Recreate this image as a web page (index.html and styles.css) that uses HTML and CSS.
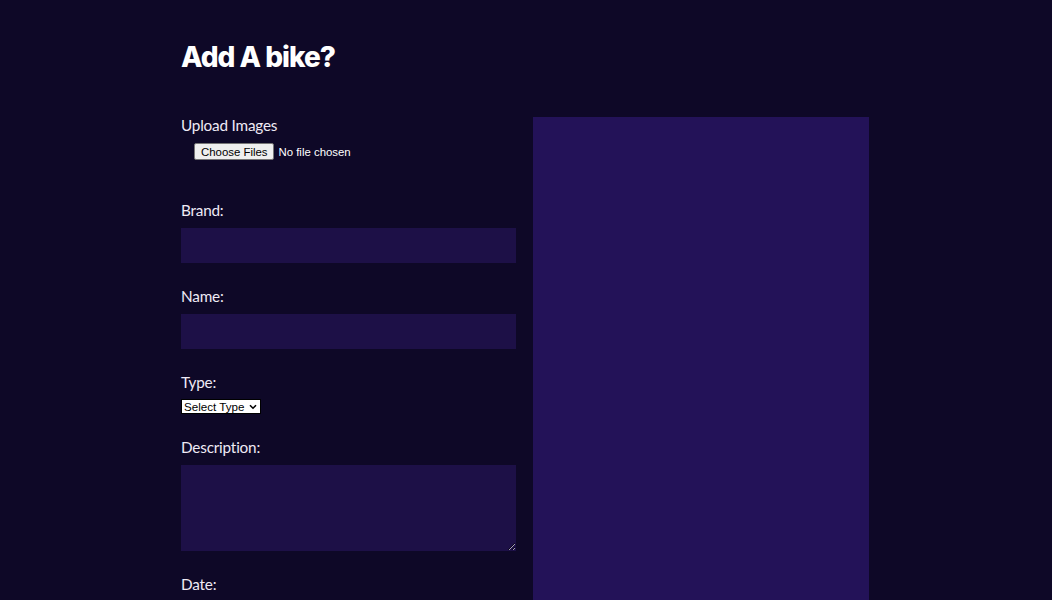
FILE: index.html
```html
<!DOCTYPE html>
<html lang="en">
<head>
<meta charset="utf-8">
<title>Add A bike?</title>
<link rel="stylesheet" href="styles.css">
</head>
<body>
<main class="page">
  <h1 class="title">Add A bike?</h1>
  <div class="layout">
    <form class="form">
      <div class="field field-upload">
        <label class="label" for="images">Upload Images</label>
        <input class="file" id="images" type="file" multiple>
      </div>
      <div class="field">
        <label class="label" for="brand">Brand:</label>
        <input class="text" id="brand" type="text">
      </div>
      <div class="field">
        <label class="label" for="name">Name:</label>
        <input class="text" id="name" type="text">
      </div>
      <div class="field field-type">
        <label class="label" for="type">Type:</label>
        <span class="select-wrap">
          <select class="select" id="type">
            <option>Select Type</option>
          </select>
          <svg class="chevron" width="8" height="6" viewBox="0 0 8 6" aria-hidden="true">
            <path d="M1 1.2 L4 4.2 L7 1.2" fill="none" stroke="#000" stroke-width="1.6"/>
          </svg>
        </span>
      </div>
      <div class="field">
        <label class="label" for="desc">Description:</label>
        <textarea class="area" id="desc"></textarea>
      </div>
      <div class="field">
        <label class="label" for="date">Date:</label>
        <input class="text" id="date" type="text">
      </div>
    </form>
    <div class="preview"></div>
  </div>
</main>
</body>
</html>
```

FILE: styles.css
```css
html, body {
  margin: 0;
  padding: 0;
  background: #0e0827;
  height: 100%;
  overflow: hidden;
}
body {
  font-family: "Lato", "Open Sans", sans-serif;
  color: #f2f0f7;
}
.page {
  width: 688px;
  margin-left: calc(50% - 345px);
  padding-top: 39px;
}
.title {
  margin: 0;
  font-family: "Inter", "Lato", sans-serif;
  font-size: 28px;
  font-weight: 800;
  line-height: 36px;
  letter-spacing: -1px;
  color: #ffffff;
}
.layout {
  display: grid;
  grid-template-columns: 335px 336px;
  column-gap: 17px;
  margin-top: 42px;
  align-items: stretch;
}
.form {
  display: flex;
  flex-direction: column;
  gap: 25px;
}
.field {
  display: flex;
  flex-direction: column;
  align-items: flex-start;
  gap: 8px;
}
.field-upload {
  gap: 8px;
  padding-bottom: 17px;
}
.field-type {
  gap: 7px;
}
.label {
  font-size: 15.3px;
  line-height: 16px;
  padding-bottom: 2px;
  color: #eeeaf5;
  letter-spacing: -0.2px;
}
.file {
  margin-left: 13px;
  height: 17px;
  font-family: "Liberation Sans", Arial, sans-serif;
  font-size: 11.4px;
  line-height: 17px;
  color: #ffffff;
}
.file::file-selector-button {
  box-sizing: border-box;
  height: 17px;
  padding: 0 6px;
  margin-right: 4px;
  font-family: "Liberation Sans", Arial, sans-serif;
  font-size: 11.4px;
  color: #000;
  background: #efefef;
  border: 1px solid #767676;
  border-radius: 2px;
}
.text {
  box-sizing: border-box;
  width: 335px;
  height: 35px;
  border: none;
  background: #1d1047;
  color: #fff;
  padding: 0 8px;
  outline: none;
}
.select-wrap {
  position: relative;
  display: inline-block;
  height: 15px;
}
.select {
  appearance: none;
  -webkit-appearance: none;
  box-sizing: border-box;
  display: block;
  width: 80px;
  height: 15px;
  font-family: "Liberation Sans", Arial, sans-serif;
  font-size: 11.6px;
  line-height: 13px;
  padding: 0 0 0 2px;
  border: 1px solid #000;
  background: #fff;
  color: #000;
  border-radius: 0;
}
.chevron {
  position: absolute;
  right: 4px;
  top: 5px;
  pointer-events: none;
}
.area {
  box-sizing: border-box;
  width: 335px;
  height: 86px;
  border: none;
  background: #1d1047;
  color: #fff;
  outline: none;
}
.preview {
  background: #231258;
  min-height: 600px;
}
```
